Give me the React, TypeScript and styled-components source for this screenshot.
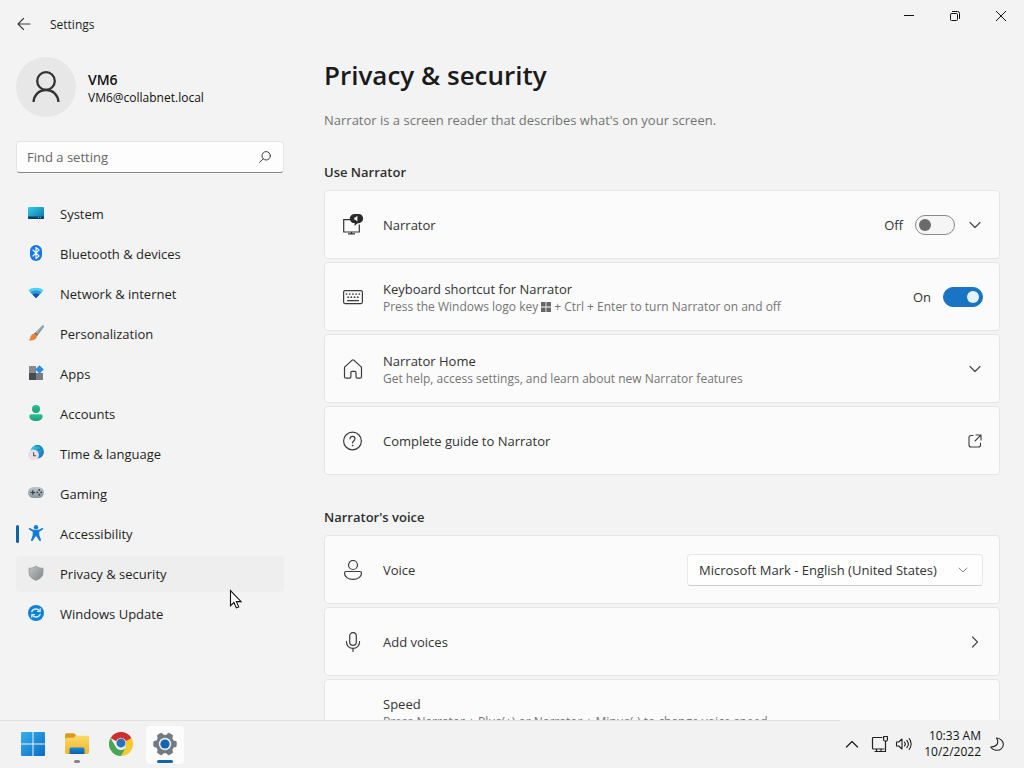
import React from "react";
import styled, { createGlobalStyle } from "styled-components";

const GlobalStyle = createGlobalStyle`
  *, *::before, *::after { box-sizing: border-box; }
  body {
    margin: 0;
    background: #f3f3f3;
    color: #1f1f1f;
    font-family: "Open Sans", "Noto Sans", sans-serif;
    font-size: 13px;
    line-height: 20px;
  }
  button, input, select { font: inherit; color: inherit; }
  h1, h2, p { margin: 0; }
  svg { display: block; flex: none; }
`;

/* ---------- window frame ---------- */

const Desktop = styled.div`
  display: flex;
  flex-direction: column;
  height: 100vh;
  overflow: hidden;
`;

const TitleBar = styled.header`
  display: flex;
  align-items: flex-start;
  height: 48px;
  flex: none;
`;

const BackButton = styled.button`
  display: grid;
  place-items: center;
  width: 50px;
  height: 48px;
  padding: 0 2px 0 0;
  border: 0;
  background: none;
`;

const AppName = styled.span`
  flex: 1;
  font-size: 12px;
  line-height: 50px;
`;

const CaptionButton = styled.button`
  display: grid;
  place-items: center;
  width: 46px;
  height: 32px;
  padding: 0;
  border: 0;
  background: none;
`;

const Body = styled.div`
  display: flex;
  flex: 1;
  min-height: 0;
`;

/* ---------- sidebar ---------- */

const Sidebar = styled.aside`
  flex: none;
  width: 284px;
  padding: 9px 0 0 16px;
`;

const Profile = styled.div`
  display: flex;
  align-items: center;
  gap: 12px;
  margin-bottom: 24px;
`;

const Avatar = styled.div`
  display: grid;
  place-items: center;
  width: 60px;
  height: 60px;
  border-radius: 50%;
  background: #e7e7e7;
`;

const UserText = styled.div`
  padding-top: 2px;
`;

const UserName = styled.div`
  font-size: 14px;
  font-weight: 600;
  color: #111;
`;

const UserMail = styled.div`
  font-size: 12px;
  line-height: 16px;
  color: #111;
`;

const SearchBox = styled.label`
  display: flex;
  align-items: center;
  height: 32px;
  padding: 0 12px 0 10px;
  border: 1px solid #e4e4e4;
  border-bottom-color: #868686;
  border-radius: 4px;
  background: #fdfdfd;
`;

const SearchInput = styled.input`
  flex: 1;
  min-width: 0;
  padding: 0;
  border: 0;
  outline: 0;
  background: none;
  &::placeholder { color: #666; opacity: 1; }
`;

const NavList = styled.ul`
  display: flex;
  flex-direction: column;
  gap: 4px;
  margin: 23px 0 0;
  padding: 0;
  list-style: none;
`;

const NavLink = styled.a<{ $current?: boolean; $hover?: boolean }>`
  display: flex;
  align-items: center;
  height: 36px;
  border-radius: 4px;
  color: inherit;
  text-decoration: none;
  background: ${(p) => (p.$hover ? "#eeeeee" : "transparent")};
  &::before {
    content: "";
    width: 3px;
    height: 18px;
    margin-right: 9px;
    border-radius: 2px;
    background: ${(p) => (p.$current ? "#0f62ac" : "transparent")};
  }
  svg { margin-right: 16px; }
`;

/* ---------- settings page ---------- */

const Page = styled.main`
  flex: 1;
  min-width: 0;
  padding: 9px 24px 24px 40px;
  overflow-y: auto;
  scrollbar-width: none;
`;

const PageTitle = styled.h1`
  font-size: 26px;
  line-height: 36px;
  font-weight: 600;
  color: #1a1a1a;
`;

const PageIntro = styled.p`
  margin-top: 17px;
  color: #737373;
`;

const SectionTitle = styled.h2`
  margin: 32px 0 8px;
  font-size: 13px;
  line-height: 20px;
  font-weight: 600;
  color: #2e2e2e;
`;

const CardStack = styled.div`
  display: flex;
  flex-direction: column;
  gap: 3px;
`;

const Card = styled.div<{ $compact?: boolean }>`
  display: flex;
  align-items: center;
  gap: 12px;
  width: 100%;
  height: ${(p) => (p.$compact ? 64 : 69)}px;
  flex: none;
  padding: 0 16px 0 18px;
  border: 1px solid #e6e6e6;
  border-radius: 4px;
  background: #fbfbfb;
  color: #333;
  text-align: left;
  text-decoration: none;
`;

const IconSlot = styled.span`
  display: grid;
  place-items: center;
  width: 20px;
  height: 20px;
  margin-right: 8px;
`;

const CardText = styled.span`
  display: flex;
  flex-direction: column;
  flex: 1;
  min-width: 0;
  padding-top: 1px;
`;

const CardHint = styled.span`
  display: flex;
  align-items: center;
  gap: 3px;
  font-size: 12px;
  line-height: 16px;
  color: #757575;
  white-space: nowrap;
`;

const SwitchLabel = styled.label`
  display: flex;
  align-items: center;
  gap: 12px;
`;

const Switch = styled.input`
  appearance: none;
  display: flex;
  align-items: center;
  width: 40px;
  height: 20px;
  margin: 0;
  padding: 0 3px;
  border: 1px solid #8a8a8a;
  border-radius: 10px;
  background: #f5f5f5;
  &::before {
    content: "";
    width: 12px;
    height: 12px;
    border-radius: 50%;
    background: #6b6b6b;
  }
  &:checked {
    justify-content: flex-end;
    border-color: #1a74c4;
    background: #1a74c4;
  }
  &:checked::before { background: #e6f3fd; }
`;

const ChevronButton = styled.button`
  display: grid;
  place-items: center;
  width: 16px;
  height: 20px;
  padding: 0;
  border: 0;
  background: none;
`;

const SelectBox = styled.label`
  display: grid;
  align-items: center;
  width: 296px;
  svg {
    grid-area: 1 / 1;
    justify-self: end;
    margin-right: 14px;
    pointer-events: none;
  }
`;

const VoiceSelect = styled.select`
  grid-area: 1 / 1;
  appearance: none;
  width: 100%;
  height: 32px;
  padding: 0 36px 0 11px;
  border: 1px solid #e8e8e8;
  border-bottom-color: #cdcdcd;
  border-radius: 4px;
  background: #fefefe;
`;

/* ---------- taskbar ---------- */

const Taskbar = styled.footer`
  display: flex;
  flex: none;
  height: 48px;
  background: #f2f2f2;
`;

const PinnedApps = styled.div`
  display: flex;
  align-items: center;
  gap: 6px;
  flex: 1;
  padding-left: 14px;
  border-top: 1px solid #e0e0e0;
`;

const AppButton = styled.button<{ $active?: boolean }>`
  position: relative;
  display: grid;
  place-items: center;
  width: 38px;
  height: 38px;
  padding: 0 1px 1px 0;
  border: 0;
  border-radius: 4px;
  background: ${(p) => (p.$active ? "#fcfcfc" : "transparent")};
`;

const RunningMark = styled.span<{ $active?: boolean }>`
  position: absolute;
  bottom: 1px;
  left: 50%;
  width: ${(p) => (p.$active ? 16 : 6)}px;
  height: 3px;
  border-radius: 2px;
  background: ${(p) => (p.$active ? "#1264ae" : "#868686")};
  transform: translateX(-50%);
`;

const Tray = styled.div`
  display: flex;
  align-items: center;
  width: 184px;
  padding: 0 20px 0 5px;
`;

const TrayButton = styled.button`
  display: grid;
  place-items: center;
  padding: 0;
  border: 0;
  background: none;
`;

const TrayStatus = styled(TrayButton)`
  grid-auto-flow: column;
  gap: 6px;
  margin-left: 12px;
`;

const Clock = styled.time`
  flex: 1;
  margin-right: 9px;
  font-size: 12px;
  line-height: 16px;
  text-align: right;
  color: #111;
`;

const Pointer = styled.svg`
  position: absolute;
  left: 229px;
  top: 589px;
`;

/* ---------- glyphs ---------- */

const Line = ({ size = 20, w = 1.2, color = "#3b3b3b", children }: { size?: number; w?: number; color?: string; children: React.ReactNode }) => (
  <svg width={size} height={size} viewBox={`0 0 ${size} ${size}`} fill="none" stroke={color} strokeWidth={w} strokeLinecap="round" strokeLinejoin="round" aria-hidden="true">
    {children}
  </svg>
);

const ChevronDown = ({ color = "#4a4a4a" }: { color?: string }) => (
  <Line size={12} color={color}><path d="M1 3.500l5 5 5-5" /></Line>
);

const SmallChevron = () => (
  <Line size={12} w={1} color="#8a8a8a"><path d="M2 4l4 4 4-4" /></Line>
);

const NavIcon = ({ children }: { children: React.ReactNode }) => (
  <svg width="16" height="18" viewBox="0 0 16 18" aria-hidden="true">{children}</svg>
);

const Stops = ({ id, from, to, vertical = false }: { id: string; from: string; to: string; vertical?: boolean }) => (
  <linearGradient id={id} x1="0" y1="0" x2={vertical ? "0" : "1"} y2="1">
    <stop offset="0" stopColor={from} />
    <stop offset="1" stopColor={to} />
  </linearGradient>
);

const navItems = [
  {
    name: "System",
    icon: (
      <NavIcon>
        <defs><Stops id="sys" from="#35cfe8" to="#0b6fa8" /></defs>
        <rect y="2" width="16" height="12" rx="1" fill="url(#sys)" />
        <path d="M0 11.500h16v1.500a1 1 0 0 1-1 1H1a1 1 0 0 1-1-1z" fill="#0a3c63" />
        <path d="M10 12.500h1M12 12.500h1" stroke="#8fd2f3" strokeWidth=".8" />
      </NavIcon>
    ),
  },
  {
    name: "Bluetooth & devices",
    icon: (
      <NavIcon>
        <rect x="2" y="0" width="12" height="16" rx="6" fill="#1477ea" />
        <path d="M5 5l6 6-3 2.700V2.300L11 5l-6 6" fill="none" stroke="#fff" strokeWidth="1.100" strokeLinejoin="round" strokeLinecap="round" />
      </NavIcon>
    ),
  },
  {
    name: "Network & internet",
    icon: (
      <NavIcon>
        <path d="M.3 5.200C4.500 1.900 11.500 1.900 15.700 5.200L13.400 7.600H2.600z" fill="#4fd0ee" />
        <path d="M2.400 7.400C5.600 4.800 10.400 4.800 13.600 7.400L11 10.200H5z" fill="#2798e2" />
        <path d="M4.600 9.700C6.600 8.200 9.400 8.200 11.400 9.700L8.600 12.800a.8.8 0 0 1-1.200 0z" fill="#1552ab" />
      </NavIcon>
    ),
  },
  {
    name: "Personalization",
    icon: (
      <NavIcon>
        <path d="M14.300.5c.9-.5 2 .4 1.500 1.400L9.600 10.400 6.800 8z" fill="#81909b" />
        <path d="M14.300.5c.4-.2.900-.2 1.200.1L8.200 9.200 6.800 8z" fill="#a9b5bd" />
        <path d="M7.200 7.600l2.700 2.300-1.300 1.400L6 9z" fill="#5b5550" />
        <path d="M6 8.700c2 0 3.500 1.700 2.900 3.300C8.100 14.600 4.500 16 .6 15.300c1.600-.8 1.500-2 2-3.700C3.100 9.900 4.300 8.800 6 8.700z" fill="#ec8434" />
      </NavIcon>
    ),
  },
  {
    name: "Apps",
    icon: (
      <NavIcon>
        <rect x="1" y="1" width="7" height="7" fill="#858b8f" />
        <rect x="1" y="8" width="7" height="7" fill="#484c50" />
        <rect x="8" y="8" width="7" height="7" fill="#777c80" />
        <path d="M11.500.2l4.300 4.300-4.300 4.300-4.300-4.300z" fill="#2d8de4" />
      </NavIcon>
    ),
  },
  {
    name: "Accounts",
    icon: (
      <NavIcon>
        <defs><Stops id="acc" from="#2cc295" to="#1c9d7c" vertical /></defs>
        <circle cx="8" cy="4" r="4" fill="url(#acc)" />
        <path d="M3.400 9.200h9.200c1.300 0 2.100.9 2.100 2 0 2.900-2.800 4.800-6.700 4.800s-6.700-1.900-6.700-4.800c0-1.100.8-2 2.100-2z" fill="url(#acc)" />
      </NavIcon>
    ),
  },
  {
    name: "Time & language",
    icon: (
      <NavIcon>
        <defs><Stops id="tim" from="#3cd4df" to="#1565c6" /></defs>
        <circle cx="9.200" cy="6.800" r="6.800" fill="url(#tim)" />
        <path d="M7 1c3-1 6 0 6.500 2-.500 2-3 1-3.500 3M13 7c1 1 1 3 0 5" stroke="#128ab8" fill="none" strokeWidth="1.200" />
        <circle cx="5.500" cy="10" r="5.400" fill="#eadfe7" />
        <path d="M5.600 7.200v3.600h2.600" stroke="#555" fill="none" strokeWidth="1.100" />
      </NavIcon>
    ),
  },
  {
    name: "Gaming",
    icon: (
      <NavIcon>
        <defs><Stops id="gam" from="#bcc6cc" to="#8b979f" vertical /></defs>
        <rect y="2" width="16" height="11" rx="5.500" fill="url(#gam)" />
        <path d="M2.500 7.500h4.600M4.800 5.200v4.600" stroke="#33393d" strokeWidth="1.200" />
        <g fill="#33393d"><circle cx="11.300" cy="5" r=".9" /><circle cx="9.400" cy="7.300" r=".9" /><circle cx="13.200" cy="7.300" r=".9" /><circle cx="11.300" cy="9.700" r=".9" /></g>
      </NavIcon>
    ),
  },
  {
    name: "Accessibility",
    current: true,
    icon: (
      <NavIcon>
        <circle cx="8" cy="2.300" r="2.200" fill="#157bd6" />
        <path d="M2 3.100c1.500 1.300 3.600 2 6 2s4.500-.7 6-2c.6-.500 1.400.1 1.200.8-.2.600-2.400 2-3.900 2.600v3.400l1.700 5.100c.2 1-1.500 1.500-1.900.6L8.600 11.500H7.400l-2.500 4.100c-.4.900-2.100.4-1.900-.6l1.700-5.100V6.500C3.200 5.900 1 4.500.8 3.900c-.2-.7.600-1.300 1.200-.8z" fill="#157bd6" />
      </NavIcon>
    ),
  },
  {
    name: "Privacy & security",
    hover: true,
    icon: (
      <NavIcon>
        <defs><Stops id="shi" from="#c4c7c9" to="#7e8487" /></defs>
        <path d="M8 1c2 1.600 4.400 2.300 7 2.300v4.200c0 4-2.800 6.400-7 7.700-4.200-1.300-7-3.700-7-7.700V3.300C3.600 3.300 6 2.600 8 1z" fill="url(#shi)" stroke="#909598" strokeWidth=".8" />
      </NavIcon>
    ),
  },
  {
    name: "Windows Update",
    icon: (
      <NavIcon>
        <circle cx="8" cy="8" r="8" fill="#1180d8" />
        <path d="M3.600 7.200C4.200 5.200 6 4 8 4c1.500 0 2.700.6 3.500 1.600M12.400 8.800c-.6 2-2.400 3.200-4.400 3.200-1.500 0-2.700-.6-3.500-1.600" fill="none" stroke="#d9f2ff" strokeWidth="1.300" />
        <path d="M12.200 3.200v3.200H9M3.800 12.800V9.600H7" fill="none" stroke="#d9f2ff" strokeWidth="1.200" />
      </NavIcon>
    ),
  },
];

const NarratorIcon = () => (
  <svg width="20" height="20" viewBox="0 0 20 20" fill="none" overflow="visible" aria-hidden="true">
    <path d="M7 4.700H.700v12.300h15.600V9.500M8.500 17v2M5 18.900h7" stroke="#333" strokeWidth="1.200" />
    <path d="M11.200-1.100h4.300a4.600 4.600 0 0 1 1.300 9l-2.600.6-2.600 2.400V8.100a4.600 4.600 0 0 1-.4-9.200z" fill="#2b2b2b" />
    <path d="M11.300 2.500h1.100l2-1.800v5.800l-2-1.700h-1.100z" fill="#fbfbfb" />
  </svg>
);

const KeyboardIcon = () => (
  <Line>
    <rect x=".6" y="3.600" width="18.800" height="13" rx="1.500" />
    <path d="M3.500 7h.1M6.700 7h.1M9.900 7h.1M13.100 7h.1M16.300 7h.1M5.100 10.200h.1M8.300 10.200h.1M11.500 10.200h.1M14.700 10.200h.1" strokeWidth="1.700" />
    <path d="M4.500 13.600h11" />
  </Line>
);

const HomeIcon = () => (
  <Line><path d="M1.500 8.800c0-.5.200-.9.600-1.200L9.200 1.100c.5-.4 1.100-.4 1.600 0l7.100 6.500c.4.300.6.700.6 1.200v8.900c0 .9-.6 1.500-1.500 1.500h-2.600c-.9 0-1.400-.6-1.400-1.400v-4.300c0-.7-.4-1.100-1.100-1.100H9c-.7 0-1.100.4-1.100 1.100v4.300c0 .8-.5 1.400-1.400 1.400H3c-.9 0-1.500-.6-1.500-1.500z" /></Line>
);

const HelpIcon = () => (
  <Line>
    <circle cx="9.500" cy="10" r="8.900" />
    <path d="M7 7.800c0-1.500 1.100-2.500 2.500-2.500S12 6.300 12 7.700c0 1.900-2.400 2.100-2.400 4.200" />
    <circle cx="9.600" cy="14.500" r=".5" fill="#3b3b3b" strokeWidth=".6" />
  </Line>
);

const PersonIcon = () => (
  <Line>
    <circle cx="10" cy="5" r="4.500" />
    <path d="M3.200 11.500h13.600c1 0 1.700.7 1.700 1.700 0 3.500-3.500 6.200-8.500 6.200s-8.500-2.700-8.500-6.200c0-1 .7-1.700 1.700-1.700z" />
  </Line>
);

const MicIcon = () => (
  <Line>
    <rect x="6.700" y=".7" width="6.600" height="12.600" rx="3.300" />
    <path d="M3.500 9.500v.8c0 3.400 2.800 6 6.500 6s6.500-2.600 6.500-6v-.8M10 16.500v3" />
  </Line>
);

const WindowsKey = () => (
  <svg width="10" height="10" viewBox="0 0 10 10" fill="#666" role="img" aria-label="Windows">
    <path d="M0 0h4.600v4.600H0zM5.400 0H10v4.600H5.400zM0 5.400h4.600V10H0zM5.400 5.400H10V10H5.400z" />
  </svg>
);

const StartLogo = () => (
  <svg width="24" height="24" viewBox="0 0 24 24" aria-hidden="true">
    <defs><linearGradient id="win" gradientUnits="userSpaceOnUse" x1="0" y1="0" x2="24" y2="24"><stop stopColor="#35b0ea" /><stop offset="1" stopColor="#0a6cc8" /></linearGradient></defs>
    <path d="M0 1a1 1 0 0 1 1-1h10.500v11.500H0zM12.500 0H23a1 1 0 0 1 1 1v10.500H12.500zM0 12.500h11.500V24H1a1 1 0 0 1-1-1zM12.500 12.500H24V23a1 1 0 0 1-1 1H12.500z" fill="url(#win)" />
  </svg>
);

const FolderLogo = () => (
  <svg width="24" height="24" viewBox="0 0 24 24" aria-hidden="true">
    <defs>
      <Stops id="fol" from="#fbd964" to="#f0b429" vertical />
      <Stops id="fol2" from="#1c8ad6" to="#0a5fae" vertical />
    </defs>
    <path d="M0 3.200C0 2 .7 1.200 1.900 1.200h6.400c.7 0 1.200.2 1.600.7L11.500 4H22c1.200 0 2 .8 2 2v4H0z" fill="#d79b1e" />
    <path d="M0 7.300c0-1 .6-1.600 1.600-1.600h6.800L11 3.800h11c1.200 0 2 .8 2 2V20c0 1.200-.8 2-2 2H2c-1.200 0-2-.8-2-2z" fill="url(#fol)" />
    <path d="M4.500 22v-4.800c0-1 .8-1.700 1.800-1.700h11.400c1 0 1.800.7 1.800 1.700V22z" fill="url(#fol2)" />
  </svg>
);

const ChromeLogo = () => (
  <svg width="24" height="24" viewBox="0 0 24 24" aria-hidden="true">
    <path d="M12 12L1.600 6A12 12 0 0 1 22.400 6z" fill="#cf2f2a" />
    <path d="M12 12V6h10.400A12 12 0 0 1 12 24l5.200-9z" fill="#f7cb2f" />
    <path d="M12 24A12 12 0 0 1 1.600 6l5.200 9a6 6 0 0 0 10.400 0z" fill="#4aa557" />
    <path d="M12 6h10.400L17 9z" fill="#cf2f2a" />
    <circle cx="12" cy="11" r="5.200" fill="#cfe0ec" />
    <circle cx="12" cy="11" r="4.400" fill="#2d6fb8" />
  </svg>
);

const GearLogo = () => (
  <svg width="24" height="24" viewBox="0 0 24 24" aria-hidden="true">
    <g fill="#727a80">
      <circle cx="12" cy="12" r="9.200" />
      {[0, 60, 120].map((a) => (
        <path key={a} d="M9.300 0.600Q12-.2 14.700.6L16 5v14l-1.300 4.400q-2.700.8-5.400 0L8 19V5z" transform={`rotate(${a + 30} 12 12)`} />
      ))}
    </g>
    <circle cx="12" cy="12" r="6.200" fill="#e9eef2" />
    <circle cx="12" cy="12" r="4.600" fill="#1464ae" />
  </svg>
);

export default function App() {
  return (
    <Desktop>
      <GlobalStyle />
      <TitleBar>
        <BackButton aria-label="Back">
          <Line size={14} w={1.1}><path d="M13 7H1M6.500 1.500L1 7l5.500 5.500" /></Line>
        </BackButton>
        <AppName>Settings</AppName>
        <CaptionButton aria-label="Minimize">
          <Line size={10} w={1} color="#111"><path d="M0 4.500h10" /></Line>
        </CaptionButton>
        <CaptionButton aria-label="Restore">
          <Line size={10} w={1} color="#111">
            <rect x=".5" y="2.500" width="7" height="7" rx="1" />
            <path d="M2.500.5h5a2 2 0 0 1 2 2v5" />
          </Line>
        </CaptionButton>
        <CaptionButton aria-label="Close">
          <Line size={10} w={1} color="#111"><path d="M0 0l10 10M10 0L0 10" /></Line>
        </CaptionButton>
      </TitleBar>

      <Body>
        <Sidebar>
          <Profile>
            <Avatar>
              <svg width="28" height="32" viewBox="0 0 28 32" fill="none" stroke="#333" strokeWidth="2.300" aria-hidden="true">
                <circle cx="14" cy="10" r="8.800" />
                <path d="M1.500 31C2 24 7 19 14 19s12 5 12.500 12" />
              </svg>
            </Avatar>
            <UserText>
              <UserName>VM6</UserName>
              <UserMail>VM6@collabnet.local</UserMail>
            </UserText>
          </Profile>
          <SearchBox>
            <SearchInput type="search" placeholder="Find a setting" aria-label="Find a setting" />
            <Line size={12} w={1}><circle cx="7.200" cy="4.800" r="4.200" /><path d="M4.200 7.800L.6 11.400" /></Line>
          </SearchBox>
          <nav>
            <NavList>
              {navItems.map((item) => (
                <li key={item.name}>
                  <NavLink href="#" $current={item.current} $hover={item.hover}>
                    {item.icon}
                    {item.name}
                  </NavLink>
                </li>
              ))}
            </NavList>
          </nav>
        </Sidebar>

        <Page>
          <PageTitle>Privacy &amp; security</PageTitle>
          <PageIntro>Narrator is a screen reader that describes what's on your screen.</PageIntro>

          <SectionTitle>Use Narrator</SectionTitle>
          <CardStack>
            <Card>
              <IconSlot><NarratorIcon /></IconSlot>
              <CardText>Narrator</CardText>
              <SwitchLabel>
                Off
                <Switch type="checkbox" role="switch" aria-label="Narrator" />
              </SwitchLabel>
              <ChevronButton aria-label="Show Narrator options"><ChevronDown /></ChevronButton>
            </Card>
            <Card>
              <IconSlot><KeyboardIcon /></IconSlot>
              <CardText>
                Keyboard shortcut for Narrator
                <CardHint>Press the Windows logo key <WindowsKey /> + Ctrl + Enter to turn Narrator on and off</CardHint>
              </CardText>
              <SwitchLabel>
                On
                <Switch type="checkbox" role="switch" defaultChecked aria-label="Keyboard shortcut for Narrator" />
              </SwitchLabel>
            </Card>
            <Card>
              <IconSlot><HomeIcon /></IconSlot>
              <CardText>
                Narrator Home
                <CardHint>Get help, access settings, and learn about new Narrator features</CardHint>
              </CardText>
              <ChevronButton aria-label="Show Narrator Home options"><ChevronDown /></ChevronButton>
            </Card>
            <Card as="a" href="#">
              <IconSlot><HelpIcon /></IconSlot>
              <CardText>Complete guide to Narrator</CardText>
              <Line size={16} w={1.1}>
                <path d="M6 2.500H4a2 2 0 0 0-2 2v7.500a2 2 0 0 0 2 2h7.500a2 2 0 0 0 2-2V10M9 2h5v5M13.800 2.200L8 8" />
              </Line>
            </Card>
          </CardStack>

          <SectionTitle>Narrator's voice</SectionTitle>
          <CardStack>
            <Card>
              <IconSlot><PersonIcon /></IconSlot>
              <CardText>Voice</CardText>
              <SelectBox>
                <VoiceSelect aria-label="Voice">
                  <option>Microsoft Mark - English (United States)</option>
                </VoiceSelect>
                <SmallChevron />
              </SelectBox>
            </Card>
            <Card as="button" type="button">
              <IconSlot><MicIcon /></IconSlot>
              <CardText>Add voices</CardText>
              <Line size={16} color="#4a4a4a"><path d="M5.500 3l5 5-5 5" /></Line>
            </Card>
            <Card $compact>
              <IconSlot />
              <CardText>
                Speed
                <CardHint>Press Narrator + Plus(+) or Narrator + Minus(-) to change voice speed</CardHint>
              </CardText>
            </Card>
          </CardStack>
        </Page>
      </Body>

      <Taskbar>
        <PinnedApps>
          <AppButton aria-label="Start"><StartLogo /></AppButton>
          <AppButton aria-label="File Explorer"><FolderLogo /><RunningMark /></AppButton>
          <AppButton aria-label="Google Chrome"><ChromeLogo /></AppButton>
          <AppButton aria-label="Settings" $active><GearLogo /><RunningMark $active /></AppButton>
        </PinnedApps>
        <Tray>
          <TrayButton aria-label="Show hidden icons">
            <Line size={14} w={1.3} color="#222"><path d="M1.500 10L7 4.500l5.500 5.500" /></Line>
          </TrayButton>
          <TrayStatus aria-label="Network and volume">
            <Line size={18} w={1.2} color="#222">
              <path d="M11 2.500H2.500a1 1 0 0 0-1 1V13a1 1 0 0 0 1 1H13M5.500 14v2.500M10 14v2.500M4 16.500h8" />
              <path d="M12.600 1.500h3.800v3.300a1.200 1.200 0 0 1-1.200 1.200h-1.400a1.200 1.200 0 0 1-1.200-1.200zM14.500 6v10.500H12.500" />
            </Line>
            <Line size={18} w={1.1} color="#222">
              <path d="M1.500 7h2.200L7 4v10l-3.300-3H1.500z" />
              <path d="M9.500 7a3.200 3.200 0 0 1 0 4M11.800 5.300a5.700 5.700 0 0 1 0 7.400M14.200 3.700a8.300 8.300 0 0 1 0 10.600" />
            </Line>
          </TrayStatus>
          <Clock dateTime="2022-10-02T10:33">
            10:33 AM
            <br />
            10/2/2022
          </Clock>
          <TrayButton aria-label="Focus assist">
            <Line size={14} w={1.1} color="#222">
              <path d="M6.500 1c4 .3 7 3 6.800 6.700C13 11.300 10 13.500 6.800 13.300 4.300 13.200 2 12 .8 10c3.700-.1 6.400-1.500 6.900-4.300C8 4 7.500 2.400 6.500 1z" />
            </Line>
          </TrayButton>
        </Tray>
      </Taskbar>

      <Pointer width="14" height="22" viewBox="0 0 14 22" aria-hidden="true">
        <path d="M1.500 1.500v15.200l3.500-3.200 2.300 5.400 2.400-1-2.300-5.300h4.700z" fill="#fff" stroke="#111" strokeWidth="1.100" />
      </Pointer>
    </Desktop>
  );
}
